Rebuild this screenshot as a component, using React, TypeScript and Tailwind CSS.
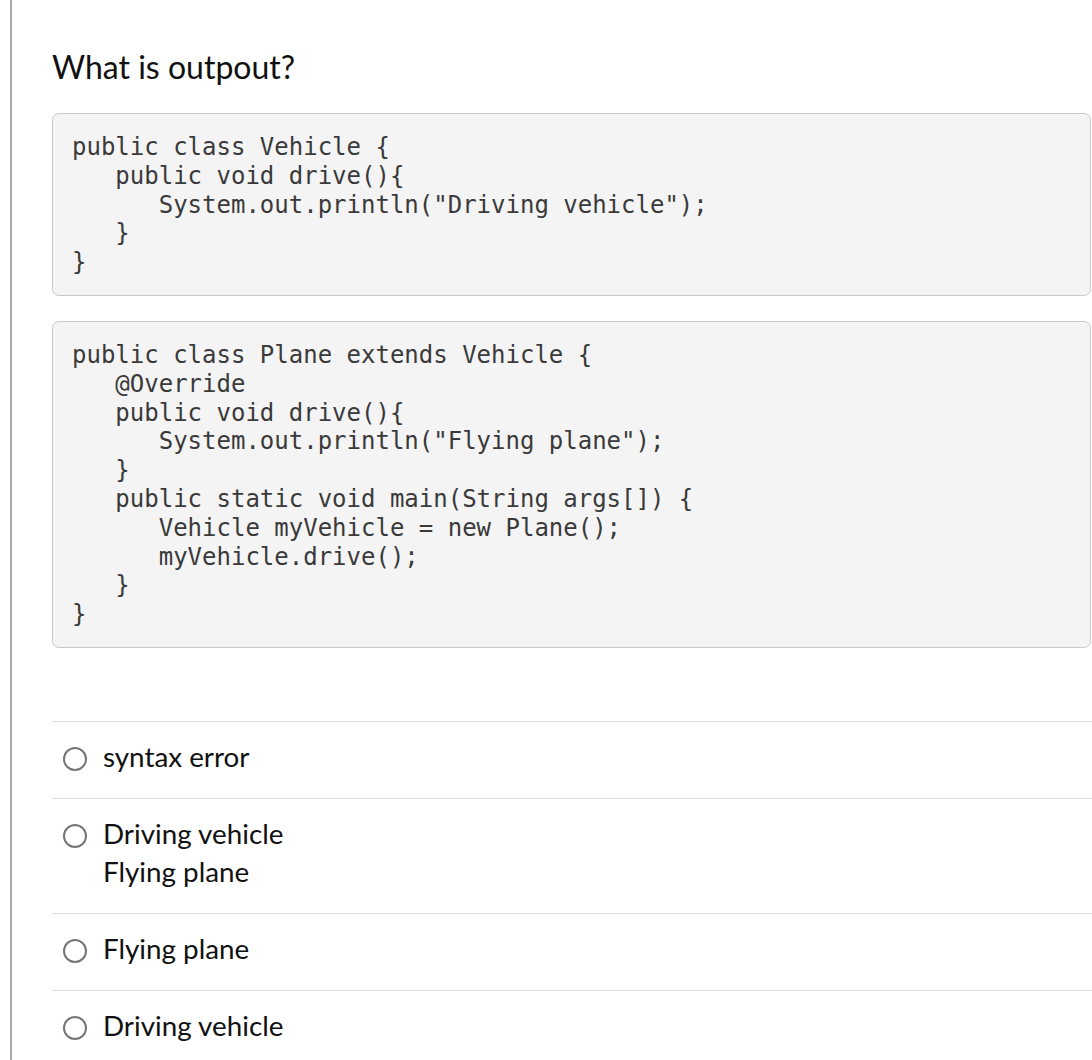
import React from 'react';

const vehicleCode = `public class Vehicle {
   public void drive(){
      System.out.println("Driving vehicle");
   }
}`;

const planeCode = `public class Plane extends Vehicle {
   @Override
   public void drive(){
      System.out.println("Flying plane");
   }
   public static void main(String args[]) {
      Vehicle myVehicle = new Plane();
      myVehicle.drive();
   }
}`;

const answers = [['syntax error'], ['Driving vehicle', 'Flying plane'], ['Flying plane'], ['Driving vehicle']];

function CodeBlock({ code }: { code: string }) {
  return (
    <pre
      className="w-[1039px] rounded-[7px] border border-[#c9c9c9] bg-[#f4f4f4] pl-[19px] pt-[19px] pb-[18px] text-[24px] leading-[28.8px] text-[#3a3a3a]"
      style={{ fontFamily: '"DejaVu Sans Mono", monospace' }}
    >
      {code}
    </pre>
  );
}

function Answer({ lines }: { lines: string[] }) {
  return (
    <div className="flex items-start border-t border-[#dcdcdc] pt-[16px] pb-[22px]">
      <span className="mt-[9px] ml-[11px] h-[24px] w-[24px] shrink-0 rounded-full border-2 border-[#757575] bg-white"></span>
      <div className="ml-[16px] text-[27.8px] leading-[38px] text-[#111]">
        {lines.map((l) => (
          <div key={l}>{l}</div>
        ))}
      </div>
    </div>
  );
}

export default function App() {
  return (
    <div className="h-[1060px] w-[1092px] overflow-hidden bg-white" style={{ fontFamily: 'Lato, "Noto Sans", sans-serif' }}>
      <div className="ml-[10px] h-full border-l-2 border-[#a9a9a9] pl-[40px]">
        <h1 className="pt-[48px] text-[32px] leading-[37px] text-[#111]">What is outpout?</h1>
        <div className="mt-[28px] flex flex-col gap-[25px]">
          <CodeBlock code={vehicleCode} />
          <CodeBlock code={planeCode} />
        </div>
        <div className="mt-[73px] w-[1100px]">
          {answers.map((a, i) => (
            <Answer key={i} lines={a} />
          ))}
        </div>
      </div>
    </div>
  );
}
